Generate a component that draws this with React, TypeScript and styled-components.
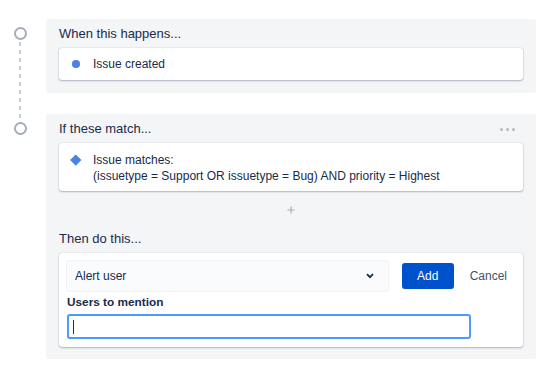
import React from 'react'
import styled, { createGlobalStyle } from 'styled-components'

const GlobalStyle = createGlobalStyle`
  body {
    margin: 0;
    background: #ffffff;
    font-family: "Liberation Sans", Arial, sans-serif;
    color: #172b4d;
  }
`

const Page = styled.div`
  padding-top: 19px;
`

const Step = styled.div`
  display: grid;
  grid-template-columns: 46px 490px;
`

const Gutter = styled.div`
  display: flex;
  flex-direction: column;
  align-items: center;
  width: 40px;
  padding-top: 8px;
`

const Node = styled.span`
  box-sizing: border-box;
  width: 13px;
  height: 13px;
  border: 2px solid #a5adba;
  border-radius: 50%;
  background: #ffffff;
`

const Connector = styled.span`
  flex: 1;
  width: 2px;
  margin: 2px 0 -4px;
  background: repeating-linear-gradient(to bottom, #c8cdd5 0 4px, transparent 4px 8px);
`

const Panel = styled.section<{ $last?: boolean }>`
  background: #f4f5f7;
  border-radius: 3px;
  padding: 5px 13px ${p => (p.$last ? '12px' : '13px')};
  margin-bottom: ${p => (p.$last ? '0' : '21px')};
`

const TitleRow = styled.div`
  display: flex;
  align-items: center;
  justify-content: space-between;
  height: 20px;
  font-size: 13px;
  line-height: 20px;
`

const Dots = styled.span`
  display: flex;
  gap: 3px;
  margin-right: 8px;

  & > i {
    width: 3px;
    height: 3px;
    border-radius: 50%;
    background: #b3bac5;
  }
`

const Card = styled.div<{ $pad?: string }>`
  display: flex;
  align-items: flex-start;
  margin-top: 4px;
  padding: ${p => p.$pad || '8px 10px'};
  background: #ffffff;
  border-radius: 3px;
  box-shadow: 0 1px 2px rgba(9, 30, 66, 0.28), 0 0 1px rgba(9, 30, 66, 0.31);
  font-size: 12px;
  line-height: 16px;
`

const IconSlot = styled.span`
  display: flex;
  align-items: center;
  justify-content: center;
  width: 14px;
  height: 16px;
  margin-right: 10px;
  flex-shrink: 0;
`

const Dot = styled.span`
  width: 7.5px;
  height: 7.5px;
  border-radius: 50%;
  background: #4b83df;
`

const Diamond = styled.span`
  width: 7.5px;
  height: 7.5px;
  background: #4b83df;
  transform: rotate(45deg);
`

const PlusRow = styled.div`
  display: flex;
  align-items: center;
  justify-content: center;
  height: 38px;
`

const ActionCard = styled(Card)`
  display: block;
  padding: 7px 4px 8px 7px;
`

const ActionRow = styled.div`
  display: flex;
  align-items: center;
`

const Select = styled.div`
  box-sizing: border-box;
  display: flex;
  align-items: center;
  justify-content: space-between;
  width: 323px;
  height: 32px;
  padding: 0 14px 0 8px;
  background: #fafbfc;
  border: 1px solid #f1f2f4;
  border-radius: 3px;
`

const AddButton = styled.button`
  width: 52px;
  height: 26px;
  margin-left: 13px;
  border: none;
  border-radius: 3px;
  background: #0052cc;
  color: #ffffff;
  font: inherit;
  font-size: 12px;
`

const CancelButton = styled.button`
  height: 26px;
  margin-left: 4px;
  padding: 0 12px;
  border: none;
  background: none;
  color: #42526e;
  font: inherit;
  font-size: 12px;
`

const Label = styled.div`
  margin: 2px 0 4px 1px;
  font-size: 11.8px;
  font-weight: 700;
  line-height: 16px;
`

const Field = styled.div`
  box-sizing: border-box;
  display: flex;
  align-items: center;
  width: 404px;
  height: 25px;
  margin-left: 1px;
  padding-left: 4px;
  border: 2px solid #4c9aff;
  border-radius: 3px;
  background: #ffffff;
`

const Caret = styled.span`
  width: 1px;
  height: 14px;
  background: #172b4d;
`

const App = () => {
  return (
    <>
      <GlobalStyle />
      <Page>
        <Step>
          <Gutter>
            <Node />
            <Connector />
          </Gutter>
          <Panel>
            <TitleRow>When this happens...</TitleRow>
            <Card>
              <IconSlot><Dot /></IconSlot>
              <span>Issue created</span>
            </Card>
          </Panel>
        </Step>

        <Step>
          <Gutter>
            <Node />
          </Gutter>
          <Panel $last>
            <TitleRow>
              <span>If these match...</span>
              <Dots><i /><i /><i /></Dots>
            </TitleRow>
            <Card $pad='9px 10px 7px'>
              <IconSlot><Diamond /></IconSlot>
              <span>
                Issue matches:<br />
                (issuetype = Support OR issuetype = Bug) AND priority = Highest
              </span>
            </Card>

            <PlusRow>
              <svg width='8' height='8' viewBox='0 0 8 8'>
                <path d='M4 0.5V7.5M0.5 4H7.5' stroke='#a5adba' strokeWidth='1.2' />
              </svg>
            </PlusRow>

            <TitleRow>Then do this...</TitleRow>
            <ActionCard>
              <ActionRow>
                <Select>
                  <span>Alert user</span>
                  <svg width='8' height='6' viewBox='0 0 8 6'>
                    <path d='M1 1.2L4 4.2L7 1.2' fill='none' stroke='#172b4d' strokeWidth='1.8' />
                  </svg>
                </Select>
                <AddButton>Add</AddButton>
                <CancelButton>Cancel</CancelButton>
              </ActionRow>
              <Label>Users to mention</Label>
              <Field><Caret /></Field>
            </ActionCard>
          </Panel>
        </Step>
      </Page>
    </>
  )
}

export default App
